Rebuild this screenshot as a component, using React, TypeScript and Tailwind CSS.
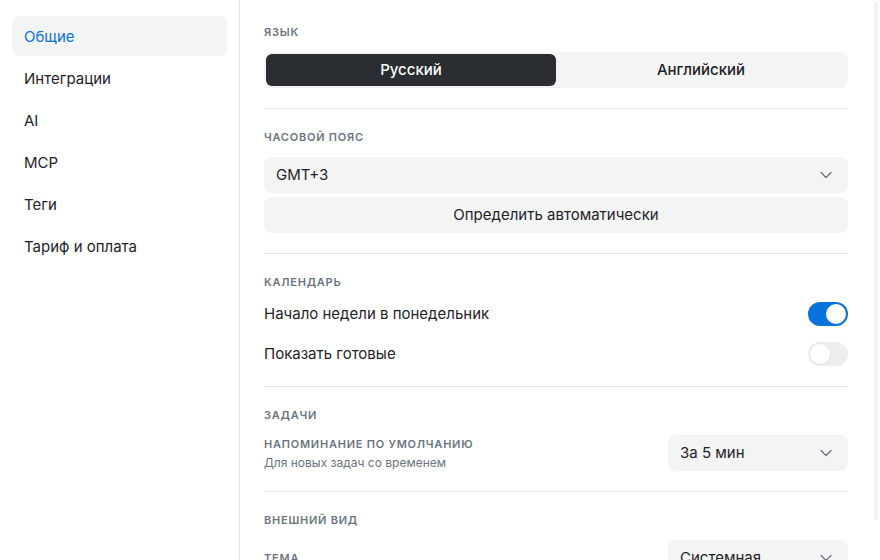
import React, { useState } from 'react';
import { ChevronDown } from 'lucide-react';

const navItems = ['Общие', 'Интеграции', 'AI', 'MCP', 'Теги', 'Тариф и оплата'];

const SectionLabel: React.FC<{ children: React.ReactNode }> = ({ children }) => (
  <div className="h-4 mb-3 text-[11px] leading-4 font-semibold tracking-[0.07em] text-[#6b7580]">
    {children}
  </div>
);

const Select: React.FC<{ value: string; className?: string }> = ({ value, className = '' }) => (
  <div className={`h-9 flex items-center justify-between rounded-lg bg-[#f3f4f4] pl-3 pr-3 ${className}`}>
    <span className="text-[15px] text-[#1f2328]">{value}</span>
    <ChevronDown size={20} strokeWidth={1.5} className="text-[#6b7280]" />
  </div>
);

const Toggle: React.FC<{ on: boolean; onClick: () => void }> = ({ on, onClick }) => (
  <button
    onClick={onClick}
    className={`w-10 h-6 rounded-full p-[2px] flex items-center ${on ? 'bg-[#0a72dc] justify-end' : 'bg-[#eceeef] justify-start'}`}
  >
    <span className={`w-5 h-5 rounded-full bg-white ${on ? '' : 'shadow-[0_0_0_1px_#e4e6e8]'}`} />
  </button>
);

export default function App() {
  const [active, setActive] = useState('Общие');
  const [lang, setLang] = useState('ru');
  const [monday, setMonday] = useState(true);
  const [showDone, setShowDone] = useState(false);

  return (
    <div
      className="relative w-[880px] h-[560px] overflow-hidden flex bg-white text-[#1f2328]"
      style={{ fontFamily: 'Inter, "Noto Sans", sans-serif' }}
    >
      {/* Sidebar */}
      <aside className="w-[240px] shrink-0 border-r border-[#e6e7e8] px-3 pt-4 flex flex-col gap-[2px]">
        {navItems.map(item => (
          <button
            key={item}
            onClick={() => setActive(item)}
            className={`h-10 rounded-lg px-3 pt-[2px] text-left text-[15px] ${
              active === item ? 'bg-[#f3f4f4] text-[#0a72dc]' : 'text-[#1f2328]'
            }`}
          >
            {item}
          </button>
        ))}
      </aside>

      {/* Main */}
      <main className="flex-1 pl-6 pr-8 pt-6">
        {/* Язык */}
        <section className="pb-5 border-b border-[#e6e7e8]">
          <SectionLabel>ЯЗЫК</SectionLabel>
          <div className="h-9 rounded-lg bg-[#f3f4f4] p-[2px] grid grid-cols-2">
            <button
              onClick={() => setLang('ru')}
              className={`rounded-md text-[15px] font-medium ${lang === 'ru' ? 'bg-[#2a2d31] text-white' : 'text-[#1f2328]'}`}
            >
              Русский
            </button>
            <button
              onClick={() => setLang('en')}
              className={`rounded-md text-[15px] font-medium ${lang === 'en' ? 'bg-[#2a2d31] text-white' : 'text-[#1f2328]'}`}
            >
              Английский
            </button>
          </div>
        </section>

        {/* Часовой пояс */}
        <section className="py-5 border-b border-[#e6e7e8]">
          <SectionLabel>ЧАСОВОЙ ПОЯС</SectionLabel>
          <Select value="GMT+3" />
          <button className="mt-1 w-full h-9 rounded-lg bg-[#f3f4f4] text-[15px] text-[#1f2328]">
            Определить автоматически
          </button>
        </section>

        {/* Календарь */}
        <section className="py-5 border-b border-[#e6e7e8]">
          <SectionLabel>КАЛЕНДАРЬ</SectionLabel>
          <div className="flex flex-col gap-4">
            <div className="flex items-center justify-between">
              <span className="text-[15px]">Начало недели в понедельник</span>
              <Toggle on={monday} onClick={() => setMonday(!monday)} />
            </div>
            <div className="flex items-center justify-between">
              <span className="text-[15px]">Показать готовые</span>
              <Toggle on={showDone} onClick={() => setShowDone(!showDone)} />
            </div>
          </div>
        </section>

        {/* Задачи */}
        <section className="py-5 border-b border-[#e6e7e8]">
          <SectionLabel>ЗАДАЧИ</SectionLabel>
          <div className="flex items-center justify-between">
            <div className="flex flex-col">
              <span className="text-[11px] leading-4 font-semibold tracking-[0.07em] text-[#6b7580]">
                НАПОМИНАНИЕ ПО УМОЛЧАНИЮ
              </span>
              <span className="mt-[3px] text-[12px] leading-4 text-[#6b7580]">Для новых задач со временем</span>
            </div>
            <Select value="За 5 мин" className="w-[180px]" />
          </div>
        </section>

        {/* Внешний вид */}
        <section className="py-5">
          <SectionLabel>ВНЕШНИЙ ВИД</SectionLabel>
          <div className="flex items-center justify-between">
            <span className="text-[11px] leading-4 font-semibold tracking-[0.07em] text-[#6b7580]">ТЕМА</span>
            <Select value="Системная" className="w-[180px]" />
          </div>
        </section>
      </main>

      {/* scrollbar thumb */}
      <div className="absolute right-[2px] top-[2px] w-[4px] h-[518px] rounded-full bg-[#f1f2f2]" />
    </div>
  );
}
